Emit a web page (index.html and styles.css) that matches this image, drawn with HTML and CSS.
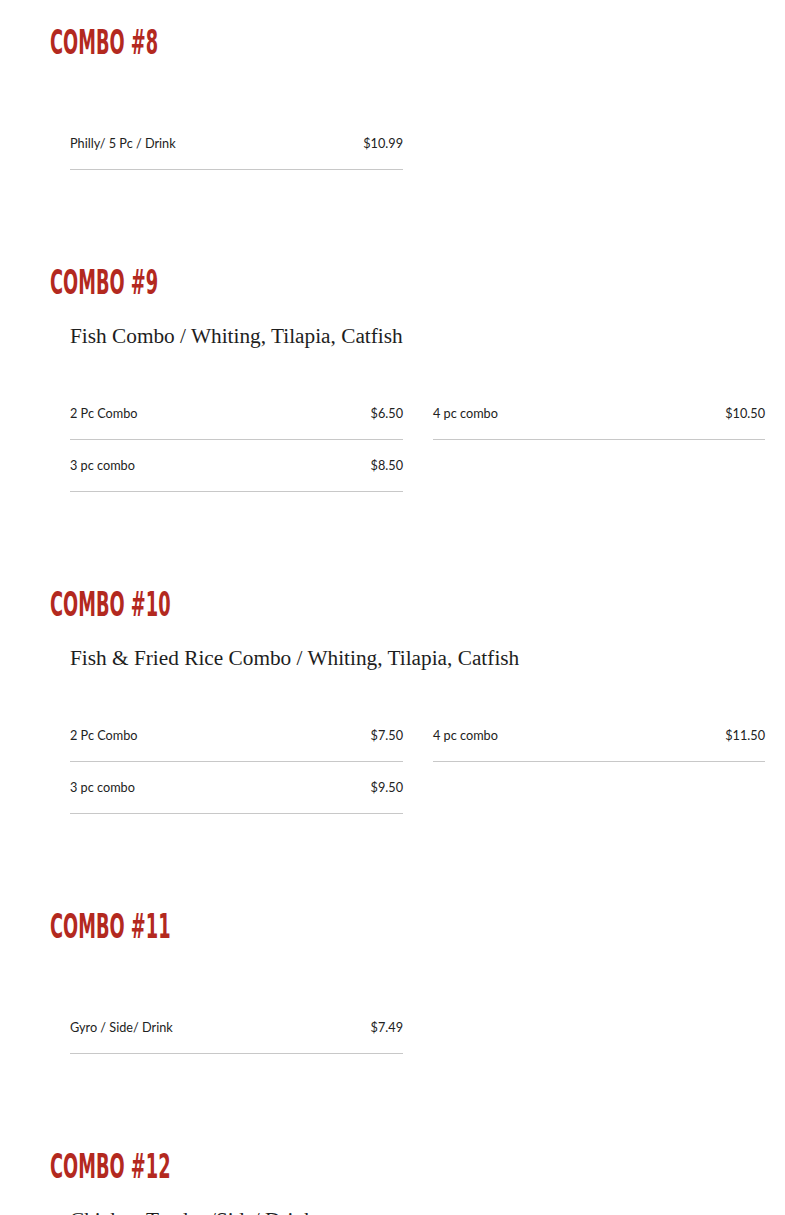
FILE: index.html
```html
<!DOCTYPE html>
<html>
<head>
<meta charset="utf-8">
<link rel="stylesheet" href="styles.css">
</head>
<body>
<main class="menu">
  <section class="combo">
    <h2 class="combo-title"><span>Combo #8</span></h2>
    <div class="items">
      <div class="item"><span class="name">Philly/ 5 Pc / Drink</span><span class="price">$10.99</span></div>
    </div>
  </section>
  <section class="combo">
    <h2 class="combo-title"><span>Combo #9</span></h2>
    <p class="desc">Fish Combo / Whiting, Tilapia, Catfish</p>
    <div class="items">
      <div class="item"><span class="name">2 Pc Combo</span><span class="price">$6.50</span></div>
      <div class="item"><span class="name">4 pc combo</span><span class="price">$10.50</span></div>
      <div class="item"><span class="name">3 pc combo</span><span class="price">$8.50</span></div>
    </div>
  </section>
  <section class="combo">
    <h2 class="combo-title"><span>Combo #10</span></h2>
    <p class="desc">Fish &amp; Fried Rice Combo / Whiting, Tilapia, Catfish</p>
    <div class="items">
      <div class="item"><span class="name">2 Pc Combo</span><span class="price">$7.50</span></div>
      <div class="item"><span class="name">4 pc combo</span><span class="price">$11.50</span></div>
      <div class="item"><span class="name">3 pc combo</span><span class="price">$9.50</span></div>
    </div>
  </section>
  <section class="combo">
    <h2 class="combo-title"><span>Combo #11</span></h2>
    <div class="items">
      <div class="item"><span class="name">Gyro / Side/ Drink</span><span class="price">$7.49</span></div>
    </div>
  </section>
  <section class="combo">
    <h2 class="combo-title"><span>Combo #12</span></h2>
    <p class="desc">Chicken Tender /Side/ Drink</p>
  </section>
</main>
</body>
</html>
```

FILE: styles.css
```css
* { box-sizing: border-box; }
html, body { margin: 0; padding: 0; background: #fff; }
body { overflow: hidden; }

.menu {
  padding: 23px 0 0 0;
  display: flex;
  flex-direction: column;
  gap: 93px;
}

.combo { display: flex; flex-direction: column; }

.combo-title {
  margin: 0 0 0 50px;
  height: 40px;
  line-height: 40px;
  font-family: "DejaVu Sans Condensed", "DejaVu Sans", sans-serif;
  font-weight: bold;
  font-size: 33px;
  text-transform: uppercase;
  color: #b3291f;
  white-space: nowrap;
}
.combo-title span {
  display: inline-block;
  transform: scaleX(0.6);
  transform-origin: left center;
}

.desc {
  margin: 18px 0 0 70px;
  height: 30px;
  line-height: 30px;
  font-family: "Liberation Serif", serif;
  font-size: 21.3px;
  color: #1e1e1e;
}

.items {
  margin: 55px 0 0 70px;
  width: 695px;
  display: grid;
  grid-template-columns: 333px 332px;
  column-gap: 30px;
}
.desc + .items { margin-top: 37px; }

.item {
  height: 52px;
  display: flex;
  justify-content: space-between;
  align-items: center;
  border-bottom: 1px solid #c8c8c8;
  font-family: "Lato", "Noto Sans", sans-serif;
  font-size: 12.7px;
  color: #222;
  padding-bottom: 1px;
}
```
